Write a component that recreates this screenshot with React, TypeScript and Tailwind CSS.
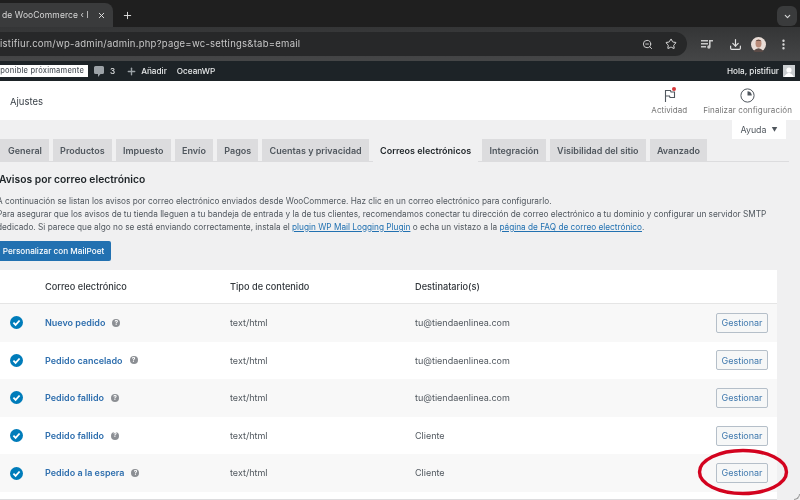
import { ChevronDown, Download, EllipsisVertical, Plus, Star, X, ZoomOut } from 'lucide-react'

const TABS = ['General', 'Productos', 'Impuesto', 'Envío', 'Pagos', 'Cuentas y privacidad', 'Correos electrónicos', 'Integración', 'Visibilidad del sitio', 'Avanzado']

const EMAILS = [
  { name: 'Nuevo pedido', to: 'tu@tiendaenlinea.com' },
  { name: 'Pedido cancelado', to: 'tu@tiendaenlinea.com' },
  { name: 'Pedido fallido', to: 'tu@tiendaenlinea.com' },
  { name: 'Pedido fallido', to: 'Cliente' },
  { name: 'Pedido a la espera', to: 'Cliente' },
]

function BrowserChrome() {
  return (
    <div className="bg-[#1f1f1f] text-[#d8d8d8]">
      {/* Tab strip */}
      <div className="flex h-[27px] items-end">
        <div className="flex h-[24px] w-[113px] items-center rounded-tr-lg bg-[#3a3b3c] pl-[2px] pr-[7px]">
          <span className="flex-1 whitespace-nowrap text-[8.5px] tracking-[0.1px]">de WooCommerce ‹ l</span>
          <X size={9} strokeWidth={2.5} className="text-[#e5e5e5]" />
        </div>
        <Plus size={11} strokeWidth={2} className="mb-[6px] ml-[9px] text-[#e5e5e5]" />
        <div className="ml-auto mb-[1px] mr-[3px] flex h-[20px] w-[20px] items-center justify-center rounded-md bg-[#3a3b3c]">
          <ChevronDown size={9} strokeWidth={3} />
        </div>
      </div>
      {/* Address bar */}
      <div className="flex h-[34px] items-center bg-gradient-to-b from-[#343536] to-[#454647]">
        <div className="flex h-[24px] w-[687px] items-center rounded-r-full bg-[#272829] pr-[10px]">
          <span className="flex-1 pt-[1px] text-[9.5px] tracking-[0.25px] text-[#c8c8c8]">istifiur.com/wp-admin/admin.php?page=wc-settings&amp;tab=email</span>
          <ZoomOut size={11} strokeWidth={2} className="mr-[12px] text-[#d8d8d8]" />
          <Star size={12} strokeWidth={2} className="text-[#e0e0e0]" />
        </div>
        <svg width="12" height="10" viewBox="0 0 12 10" className="ml-[14px] text-[#c8c8c8]" fill="currentColor">
          <path d="M0 1h7v1.4H0zM0 4h7v1.4H0zM0 7h5v1.4H0zM8 1h4v1.6H9.6v5.4a1.7 1.7 0 1 1-1.6-1.7z" />
        </svg>
        <Download size={13} strokeWidth={2.2} className="ml-[16px] text-[#e0e0e0]" />
        <svg width="15" height="15" viewBox="0 0 15 15" className="ml-[9px]">
          <circle cx="7.5" cy="7.5" r="7.5" fill="#e8dcd6" />
          <ellipse cx="7.5" cy="6.5" rx="3" ry="4" fill="#b98a78" />
          <path d="M4 4.5Q7.5 0.8 11 4.5L10 4Q7.5 3 5 4z" fill="#3a2a25" />
          <path d="M2.5 14Q7.5 8.5 12.5 14A7.5 7.5 0 0 1 2.5 14z" fill="#5a4a46" />
        </svg>
        <EllipsisVertical size={13} strokeWidth={2.4} className="ml-[11px] text-[#d8d8d8]" />
      </div>
    </div>
  )
}

function AdminBar() {
  return (
    <div className="flex h-[20px] items-center bg-[#1d2327] text-[8.2px] font-medium text-[#e8eaeb]">
      <span className="flex h-[12px] w-[88px] items-center justify-end whitespace-nowrap bg-white pr-[4px] text-[7.5px] tracking-[0.2px] text-[#50575e]">sponible próximamente</span>
      <svg width="10" height="11" viewBox="0 0 10 11" className="ml-[6px] text-[#9ca2a7]" fill="currentColor">
        <path d="M1.5 0h7A1.5 1.5 0 0 1 10 1.5v5A1.5 1.5 0 0 1 8.5 8H6.5L4 11V8H1.5A1.5 1.5 0 0 1 0 6.5v-5A1.5 1.5 0 0 1 1.5 0z" />
      </svg>
      <span className="ml-[6px]">3</span>
      <Plus size={11} strokeWidth={3} className="ml-[11px] text-[#9ca2a7]" />
      <span className="ml-[4px]">Añadir</span>
      <span className="ml-[10px]">OceanWP</span>
      <span className="ml-auto">Hola, pistifiur</span>
      <span className="ml-[4px] mr-[5px] flex h-[12px] w-[12px] items-end justify-center overflow-hidden bg-[#c9cdd0]">
        <svg width="10" height="11" viewBox="0 0 10 11" fill="#fff">
          <circle cx="5" cy="4" r="2.6" />
          <path d="M0 11Q5 3 10 11z" />
        </svg>
      </span>
    </div>
  )
}

function SettingsHeader() {
  return (
    <div className="flex h-[39px] items-center bg-white pl-[10px] pt-[3px] text-[#3c434a]">
      <span className="flex-1 text-[9.5px]">Ajustes</span>
      <div className="relative mr-[16px] flex flex-col items-center">
        <svg width="13" height="13" viewBox="0 0 13 13" fill="none" stroke="#50575e" strokeWidth="1.1">
          <path d="M2.5 13V1.5H7.5L8 3H11.5V8.5H7L6.5 7H2.5" />
        </svg>
        <span className="absolute left-[21px] top-[-2px] h-[4px] w-[4px] rounded-full bg-[#d63638]" />
        <span className="mt-[2px] text-[8px] tracking-[0.05px] text-[#757575]">Actividad</span>
      </div>
      <div className="mr-[8px] flex flex-col items-center">
        <svg width="15" height="15" viewBox="0 0 15 15" fill="none">
          <circle cx="7.5" cy="7.5" r="6.6" stroke="#50575e" strokeWidth="1" />
          <path d="M7.5 3.2A4.3 4.3 0 0 1 11.8 7.5H7.5z" fill="#50575e" />
        </svg>
        <span className="mt-[1px] text-[8px] tracking-[0.12px] text-[#757575]">Finalizar configuración</span>
      </div>
    </div>
  )
}

function CheckIcon() {
  return (
    <svg width="13" height="13" viewBox="0 0 13 13">
      <circle cx="6.5" cy="6.5" r="6.5" fill="#007cba" />
      <path d="M3.4 6.7l2.2 2.2 4-4.4" fill="none" stroke="#fff" strokeWidth="1.8" />
    </svg>
  )
}

function HelpIcon() {
  return (
    <span className="flex h-[8px] w-[8px] items-center justify-center rounded-full bg-[#8c8f94] text-[6.5px] font-bold leading-none text-white">?</span>
  )
}

export default function App() {
  return (
    <div className="relative h-[500px] w-[800px] overflow-hidden bg-[#f0f0f1] font-['Inter','Liberation_Sans',sans-serif] blur-[0.3px]">
      <BrowserChrome />
      <AdminBar />
      <SettingsHeader />

      <div className="flex h-[19px] justify-end pr-[14px]">
        <div className="flex w-[54px] items-center justify-center gap-[5px] bg-white text-[8.8px] text-[#50575e]">
          Ayuda <span className="text-[6px]">▼</span>
        </div>
      </div>

      {/* Tabs */}
      <div className="mr-[11px] flex h-[23px] gap-[4px] border-b border-[#dcdcde]">
        {TABS.map((t, i) => (
          <div
            key={t}
            className={
              i === 6
                ? 'flex h-[23px] items-center bg-[#f0f0f1] px-[7.2px] text-[9px] font-semibold text-[#1d2327]'
                : i === 0
                  ? 'flex h-[23px] items-center bg-[#dcdcde] pl-[8px] pr-[7px] text-[9px] font-semibold text-[#50575e]'
                  : 'flex h-[23px] items-center bg-[#dcdcde] px-[7.2px] text-[9px] font-semibold text-[#50575e]'
            }
          >
            {t}
          </div>
        ))}
      </div>

      <h2 className="-ml-[1px] mt-[10px] text-[10.3px] font-semibold leading-[14px] text-[#1d2327]">Avisos por correo electrónico</h2>

      <div className="-ml-[3px] mt-[9px] whitespace-nowrap text-[8.26px] leading-[13px] text-[#50575e]">
        <p>A continuación se listan los avisos por correo electrónico enviados desde WooCommerce. Haz clic en un correo electrónico para configurarlo.</p>
        <p>Para asegurar que los avisos de tu tienda lleguen a tu bandeja de entrada y la de tus clientes, recomendamos conectar tu dirección de correo electrónico a tu dominio y configurar un servidor SMTP</p>
        <p>
          dedicado. Si parece que algo no se está enviando correctamente, instala el <a className="text-[#2271b1] underline">plugin WP Mail Logging Plugin</a> o echa un vistazo a la <a className="text-[#2271b1] underline">página de FAQ de correo electrónico</a>.
        </p>
      </div>

      <button className="-ml-[8px] mt-[7px] block h-[20px] w-[119px] rounded-[2px] bg-[#2271b1] pl-[4px] text-center text-[8.2px] font-medium text-white">
        Personalizar con MailPoet
      </button>

      {/* Email table */}
      <div className="mt-[9px] w-[777px] border-b border-[#dcdcde] bg-white pb-[7px] text-[9px]">
        <div className="grid h-[34px] grid-cols-[45px_185px_185px_1fr] items-center border-b border-[#e5e5e5] text-[9.2px] font-medium text-[#32373c]">
          <span />
          <span>Correo electrónico</span>
          <span>Tipo de contenido</span>
          <span>Destinatario(s)</span>
        </div>
        {EMAILS.map((e, i) => (
          <div
            key={i}
            className={`grid h-[37.6px] grid-cols-[45px_185px_185px_1fr] items-center ${i % 2 === 0 ? 'bg-[#f8f8f8]' : 'bg-white'}`}
          >
            <span className="pl-[10px]">
              <CheckIcon />
            </span>
            <span className="flex items-center gap-[7px] font-semibold text-[#2f6fae]">
              {e.name}
              <HelpIcon />
            </span>
            <span className="text-[#50575e]">text/html</span>
            <span className="flex items-center justify-between pr-[9px] text-[#50575e]">
              {e.to}
              <span className="flex h-[20px] w-[52px] items-center justify-center rounded-[2px] border border-[#b5bfc9] bg-[#f6f7f7] text-[#3f78ad]">
                Gestionar
              </span>
            </span>
          </div>
        ))}
      </div>

      {/* Red circle drawn over the screenshot */}
      <svg width="94" height="50" viewBox="0 0 94 50" className="absolute left-[696px] top-[447px]" fill="none">
        <ellipse cx="47" cy="25" rx="43.5" ry="21.5" stroke="#d3031f" strokeWidth="3.4" />
      </svg>
      {/* Window corner */}
      <div className="absolute bottom-0 right-0 h-[6px] w-[6px] rounded-br-[6px] border-b border-r border-[#9a9a9a]" />
    </div>
  )
}
